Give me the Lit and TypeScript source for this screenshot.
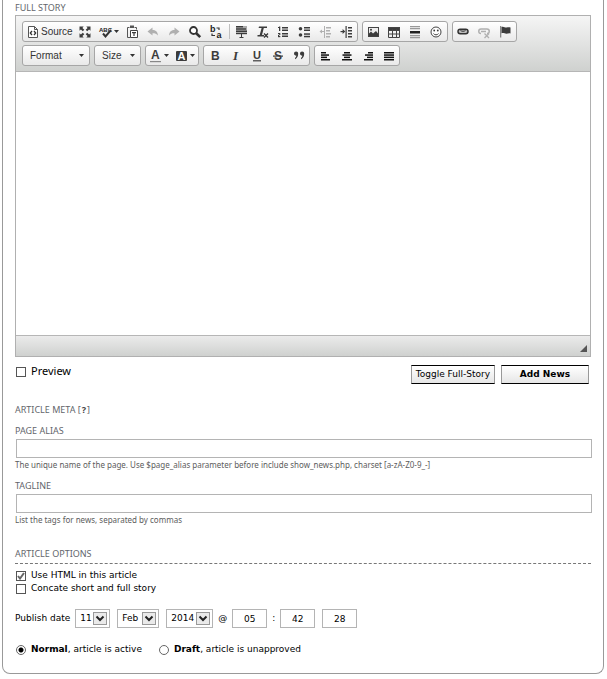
import { LitElement, html, svg, css, TemplateResult } from "lit";
import { customElement, property } from "lit/decorators.js";

const lines = (rows: number[][]) =>
  rows.map(([x, y, w, h = 1.5]) => svg`<rect x=${x} y=${y} width=${w} height=${h} />`);

const ICONS: Record<string, TemplateResult> = {
  source: svg`<path d="M3.500 2.500h6l3 3v8h-9z M9.500 2.500v3h3" fill="#fff" stroke="#555"/>
    <path d="M7 7 5.300 9 7 11 M9 7l1.700 2L9 11" fill="none" stroke="#333" stroke-width="1.300"/>`,
  maximize: svg`<path d="M2.500 2.500h4.200L5.400 3.900 7.300 5.800 5.800 7.300 3.900 5.400 2.500 6.700z M13.500 2.500v4.200l-1.400-1.300-1.900 1.900-1.500-1.500 1.900-1.900L9.300 2.500z M2.500 13.500V9.300l1.400 1.300 1.900-1.900 1.500 1.500-1.900 1.900 1.300 1.400z M13.500 13.500H9.300l1.300-1.400-1.900-1.900 1.500-1.500 1.900 1.900 1.400-1.300z"/>`,
  spell: svg`<text x="2" y="7.500" font-size="6" font-weight="700" fill="#222">ABC</text>
    <path d="M6 9.500l2.500 3L14 6" fill="none" stroke="#333" stroke-width="2"/>`,
  paste: svg`<path d="M5.500 3.500h-2v10h3 M10.500 3.500h2v2" fill="none" stroke="#555"/>
    <path d="M6 1.500h4v2.500H6z" fill="#555"/><path d="M6.500 6.500h7v7h-7z" fill="#fff" stroke="#444"/>
    <path d="M8 8h4v1.200h-1.400V12H9.400V9.200H8z"/>`,
  undo: svg`<path d="M2.500 7.500 7.500 3.500v2.500c3 0 5.200 1.700 5.500 5.500-1.300-1.900-3-2.300-5.500-2.300v2.300z"/>`,
  redo: svg`<path d="M13.500 7.500 8.500 3.500v2.500c-3 0-5.200 1.700-5.500 5.500 1.300-1.900 3-2.300 5.500-2.300v2.300z"/>`,
  find: svg`<circle cx="6.500" cy="6.500" r="3.500" fill="#fff" stroke="#333" stroke-width="1.800"/>
    <path d="M9 9l4.200 4.200" stroke="#333" stroke-width="2.600"/>`,
  replace: svg`<text x="2" y="8" font-size="9" font-weight="700" fill="#222">b</text>
    <text x="8.500" y="14" font-size="9" font-weight="700" fill="#222">a</text>
    <path d="M8.500 4h2.500v2 M4 9.500v2h3" fill="none" stroke="#333" stroke-width="1.200"/>`,
  selectAll: svg`<path d="M3 2h11v8H3z" fill="#aaa"/>
    ${lines([[3, 2, 7, 1.4], [3, 4.300, 10, 1.4], [3, 6.600, 11, 1.4], [3, 9, 11, 1.2], [8, 10, 1, 4], [6.500, 13, 4, 1]])}`,
  removeFormat: svg`<path d="M5 2.500h8v1.600H9.800L8 11h2v1.500H3.500V11h2.200l1.900-6.900H4.600z"/>
    <path d="M10 9.500l4 4 M14 9.500l-4 4" stroke="#333" stroke-width="1.300"/>`,
  numbered: svg`${lines([[7, 3, 6], [7, 5.500, 6], [7, 9, 6], [7, 11.500, 6], [4, 2.500, 1.300, 4.500], [3, 3, 1, 1], [3, 9, 2.300, 1.200], [4.200, 10, 1.100, 1], [3, 11, 1.200, 1], [3, 12, 2.300, 1.200]])}`,
  bulleted: svg`<circle cx="4.500" cy="4.800" r="1.800"/><circle cx="4.500" cy="11" r="1.800"/>
    ${lines([[8, 3, 6], [8, 5.500, 6], [8, 9.300, 6], [8, 11.800, 6]])}`,
  outdent: svg`${lines([[7, 2, 1, 12], [9, 3, 5], [9, 6, 4], [9, 9, 5], [9, 12, 4], [4, 7, 3, 1]])}<path d="M2.500 7.500l2.500-2v4z"/>`,
  indent: svg`${lines([[7.500, 2, 1.200, 12], [10, 3, 4], [10, 6, 4], [10, 9, 4], [10, 12, 4], [2.500, 7, 3, 1.200]])}<path d="M7.300 7.500l-2.700-2.500v5z"/>`,
  image: svg`<rect x="3.500" y="3.500" width="10" height="9" fill="#eee" stroke="#444"/>
    <path d="M4 12V9.500l2-2 2 2 3-2.500 2 2.500V12z"/><circle cx="6" cy="5.800" r="1"/>`,
  table: svg`<path d="M2 3h12v3H2z"/><path d="M2.500 3.500h11v10h-11z M2.500 6.500h11 M2.500 10h11 M6.500 5v8 M10.500 5v8" fill="none" stroke="#444"/>`,
  rule: svg`<path d="M3 2h10v1.200H3z M3 4h10v1.200H3z M3 11h10v1.200H3z M3 13h10v1.200H3z" fill="#999"/><path d="M3 7h10v2.500H3z" fill="#222"/>`,
  smiley: svg`<circle cx="8" cy="8" r="5" fill="#fff" stroke="#444"/><circle cx="6.200" cy="6.500" r=".9"/><circle cx="9.800" cy="6.500" r=".9"/>
    <path d="M5.500 9.500c1.200 1.800 3.800 1.800 5 0" fill="none" stroke="#444"/>`,
  link: svg`<rect x="3" y="5.300" width="10" height="4.500" rx="2.200" fill="#bbb" stroke="#333" stroke-width="1.500"/>
    <path d="M5.500 6.500c1.500 1 3.500 1 5 0" fill="none" stroke="#333"/>`,
  unlink: svg`<path d="M5 9.500c-3 0-3-4.500 0-4.500h6c3 0 3 4.500 0 4.500 M5 7.500h5" fill="none" stroke="currentColor" stroke-width="1.500"/>
    <path d="M8.500 9.500l4.500 4.500 M13 9.500l-4.500 4.500" stroke="currentColor" stroke-width="1.300"/>`,
  anchor: svg`<path d="M3 2h1.300v11.500H3z" fill="#888"/><path d="M4.500 3c2-1 3.500.8 5 .6 1.300-.2 2.500-.6 4-.1V9.500c-1.500-.5-2.700.2-4.200.2S6.500 8.500 4.500 9.300z"/>`,
  textColor: svg`<text x="4" y="11" font-size="12" font-weight="700">A</text><path d="M3 13h11v1.200H3z" fill="#888"/>`,
  bgColor: svg`<rect x="3" y="3" width="11" height="10" rx="1" /><text x="4.500" y="12" font-size="11" font-weight="700" fill="#fff">A</text>`,
  bold: svg`<text x="4" y="12" font-size="12" font-weight="700">B</text>`,
  italic: svg`<text class="serif" x="5" y="12" font-size="13" font-weight="700" font-style="italic">I</text>`,
  underline: svg`<text x="4" y="11" font-size="11" font-weight="700">U</text><path d="M4 12.200h8v1.200H4z"/>`,
  strike: svg`<text x="4" y="12" font-size="12" font-weight="700">S</text><path d="M3 7.500h10v1.200H3z"/>`,
  quote: svg`<path d="M3 5.500a2.100 2.100 0 1 1 4.200 0c0 3-1 4.600-3.200 5.800v-1.400c.8-.6 1.300-1.300 1.400-2.200C4 7.700 3 6.800 3 5.500z M9 5.500a2.100 2.100 0 1 1 4.200 0c0 3-1 4.600-3.200 5.800v-1.400c.8-.6 1.300-1.300 1.400-2.200C10 7.700 9 6.800 9 5.500z"/>`,
  left: svg`<g fill="#111">${lines([[3, 4, 5], [3, 6.300, 8], [3, 8.600, 6], [3, 11, 9]])}</g>`,
  center: svg`<g fill="#111">${lines([[5, 4, 6], [3.500, 6.300, 9], [5, 8.600, 6], [3, 11, 10]])}</g>`,
  right: svg`<g fill="#111">${lines([[8, 4, 5], [5, 6.300, 8], [7, 8.600, 6], [4, 11, 9]])}</g>`,
  justify: svg`<g fill="#111">${lines([[3, 4, 10], [3, 6.300, 10], [3, 8.600, 10], [3, 11, 10]])}</g>`,
};

@customElement("tool-button")
class ToolButton extends LitElement {
  @property() icon = "";
  @property() label = "";
  @property() text = "";
  @property({ type: Boolean }) menu = false;
  @property({ type: Boolean }) off = false;

  static styles = css`
    :host { display: block; }
    .tool {
      display: flex; align-items: center; justify-content: center;
      min-width: 21px; height: 19px; padding: 0 2px; border: 0; background: none;
      color: #3c3c3c; font: 10px/14px "Liberation Sans", Arial, sans-serif;
    }
    .tool:disabled { color: #b0b0b0; }
    .menu { padding: 0 1px; }
    .icon { width: 16px; height: 16px; fill: currentColor; font-family: "Liberation Sans", Arial, sans-serif; }
    .serif { font-family: "Liberation Serif", serif; }
    .caret { width: 5px; height: 3px; margin: 0 2px 0 1px; fill: #333; }
    .text { color: #333; }
  `;

  render() {
    return html`<button class="tool ${this.menu ? "menu" : ""}" type="button" aria-label=${this.label} ?disabled=${this.off}>
      <svg class="icon" viewBox="0 0 16 16" aria-hidden="true">${ICONS[this.icon]}</svg>
      ${this.text ? html`<span class="text">${this.text}</span>` : ""}
      ${this.menu ? html`<svg class="caret" viewBox="0 0 5 3" aria-hidden="true"><path d="M0 0h5L2.500 3z"/></svg>` : ""}
    </button>`;
  }
}

const tool = (icon: string, label: string, off = false) =>
  html`<tool-button icon=${icon} label=${label} ?off=${off}></tool-button>`;

@customElement("app-root")
class AppRoot extends LitElement {
  static styles = css`
    :host { display: block; background: #fff; color: #000; font: 9px/13px "DejaVu Sans", Verdana, sans-serif; }
    * { box-sizing: border-box; }
    .card {
      margin: 0 3px 0 2px; padding: 2px 11px 17px 12px; border: 1px solid #999; border-top: 0;
      border-radius: 0 0 8px 8px;
    }
    .label { display: block; margin: 0; color: #63666c; font: 9px/12px "Noto Sans", Tahoma, sans-serif; }
    .label a { padding: 0 1px; color: #444; font-weight: 700; text-decoration: none; }

    .editor { margin: 1px 1px 0 0; border: 1px solid #b0b0b0; }
    .toolbar {
      display: flex; flex-direction: column; gap: 3px; padding: 5px 6px;
      border-bottom: 1px solid #b6b6b6; background: linear-gradient(#f5f5f5, #cfd1cf);
    }
    .tools { display: flex; gap: 4px; }
    .group {
      display: flex; border: 1px solid #a6a6a6; border-radius: 3px;
      background: linear-gradient(#fff, #e9e9e9);
    }
    .divider { width: 1px; height: 15px; margin: 2px 1px 2px 2px; background: #c0c0c0; }
    .combo { position: relative; }
    .combo select {
      appearance: none; width: 66px; height: 19px; padding: 0 7px; border: 0; background: none;
      color: #333; font: 10px/14px "Liberation Sans", Arial, sans-serif;
    }
    .combo .narrow { width: 45px; }
    .caret { position: absolute; right: 5px; top: 8px; width: 5px; height: 3px; fill: #333; pointer-events: none; }
    .story { display: block; width: 100%; height: 263px; border: 0; padding: 8px; resize: none; outline: 0; background: #fff; }
    .status {
      display: flex; justify-content: flex-end; align-items: flex-end; height: 21px; padding: 4px 3px;
      border-top: 1px solid #b6b6b6; background: linear-gradient(#ebebeb, #cfd1cf);
    }
    .grip { width: 7px; height: 7px; fill: #555; }

    .actions { display: flex; gap: 6px; align-items: flex-start; margin: 8px 3px 20px 0; }
    .preview { margin-right: auto; }
    .preview span { margin-top: -3px; font: 11px/13px "Noto Sans", Tahoma, sans-serif; }
    .btn {
      height: 19px; padding: 0 4px; border: 1px solid #999; border-color: #000 #999;
      background: linear-gradient(#fff, #e6e6e6); color: #000; font: inherit;
    }
    .primary { min-width: 88px; font-weight: 700; }

    .option { display: flex; align-items: center; gap: 5px; height: 13px; }
    .check, .radio { appearance: none; flex: none; width: 10px; height: 10px; margin: 0 0 0 1px; border: 1px solid #555; background: #fff; }
    .mark { position: relative; display: flex; }
    .tick { position: absolute; left: 2px; top: 1px; width: 8px; height: 8px; fill: none; stroke: #666; stroke-width: 2; pointer-events: none; }
    .radio { border-color: #666; border-radius: 50%; }
    .radio:checked { background: radial-gradient(circle, #000 0 2px, #fff 3px); }

    .field { margin-top: 9px; }
    .text {
      display: block; width: calc(100% - 1px); height: 19px; margin: 2px 0 0 1px; padding: 2px 4px;
      border: 1px solid #b4b4b4; background: #fff; font: inherit;
    }
    .hint { margin: 0; color: #5c5c5c; font: 8px/13px "Noto Sans", Tahoma, sans-serif; }
    .options { margin: 22px 1px 5px 0; padding-bottom: 3px; border-bottom: 1px dashed #777; }

    .date { display: flex; align-items: center; gap: 7px; margin: 14px 0 15px; }
    .date .first { margin-right: -2px; }
    .date .sep { margin: 0 -2px; }
    .pick { position: relative; display: flex; }
    .pick select, .num {
      appearance: none; height: 19px; padding: 0 4px; border: 1px solid #b4b4b4; border-radius: 0;
      background: #fff; color: #000; font: inherit;
    }
    .day { width: 35px; }
    .month { width: 42px; }
    .year { width: 47px; }
    .num { width: 35px; text-align: center; }
    .drop {
      position: absolute; right: 3px; top: 3px; width: 14px; height: 13px; border: 1px solid #999;
      background: #eaeaea; fill: none; stroke: #222; stroke-width: 2; pointer-events: none;
    }
    .states { display: flex; gap: 16px; }
  `;

  private pick(id: string, label: string, value: string) {
    return html`<span class="pick">
      <select id=${id} class=${id} aria-label=${label}><option>${value}</option></select>
      <svg class="drop" viewBox="0 0 12 11" aria-hidden="true"><path d="M2.500 3.500 6 7l3.500-3.500"/></svg>
    </span>`;
  }

  private combo(label: string, cls = "") {
    return html`<div class="group"><span class="combo">
      <select class=${cls} aria-label=${label}><option>${label}</option></select>
      <svg class="caret" viewBox="0 0 5 3" aria-hidden="true"><path d="M0 0h5L2.500 3z"/></svg>
    </span></div>`;
  }

  render() {
    return html`<form class="card">
      <label class="label" for="story">FULL STORY</label>
      <section class="editor">
        <div class="toolbar">
          <div class="tools">
            <div class="group">
              <tool-button icon="source" label="Source" text="Source"></tool-button>
              ${tool("maximize", "Maximize")}
              <tool-button icon="spell" label="Spell check" menu></tool-button>
              ${tool("paste", "Paste as plain text")}
              ${tool("undo", "Undo", true)} ${tool("redo", "Redo", true)}
              ${tool("find", "Find")} ${tool("replace", "Replace")}
              <span class="divider"></span>
              ${tool("selectAll", "Select all")} ${tool("removeFormat", "Remove format")}
              ${tool("numbered", "Numbered list")} ${tool("bulleted", "Bulleted list")}
              ${tool("outdent", "Decrease indent", true)} ${tool("indent", "Increase indent")}
            </div>
            <div class="group">
              ${tool("image", "Image")} ${tool("table", "Table")}
              ${tool("rule", "Horizontal line")} ${tool("smiley", "Smiley")}
            </div>
            <div class="group">
              ${tool("link", "Link")} ${tool("unlink", "Unlink", true)} ${tool("anchor", "Anchor")}
            </div>
          </div>
          <div class="tools">
            ${this.combo("Format")} ${this.combo("Size", "narrow")}
            <div class="group">
              <tool-button icon="textColor" label="Text color" menu></tool-button>
              <tool-button icon="bgColor" label="Background color" menu></tool-button>
            </div>
            <div class="group">
              ${tool("bold", "Bold")} ${tool("italic", "Italic")} ${tool("underline", "Underline")}
              ${tool("strike", "Strike through")} ${tool("quote", "Block quote")}
            </div>
            <div class="group">
              ${tool("left", "Align left")} ${tool("center", "Center")}
              ${tool("right", "Align right")} ${tool("justify", "Justify")}
            </div>
          </div>
        </div>
        <textarea id="story" class="story"></textarea>
        <div class="status"><svg class="grip" viewBox="0 0 7 7" aria-hidden="true"><path d="M7 0v7H0z"/></svg></div>
      </section>

      <div class="actions">
        <label class="option preview"><input class="check" type="checkbox" /><span>Preview</span></label>
        <button class="btn" type="button">Toggle Full-Story</button>
        <button class="btn primary" type="button">Add News</button>
      </div>

      <h2 class="label">ARTICLE META [<a href="#help">?</a>]</h2>
      <div class="field">
        <label class="label" for="alias">PAGE ALIAS</label>
        <input id="alias" class="text" type="text" />
        <p class="hint">The unique name of the page. Use $page_alias parameter before include show_news.php, charset [a-zA-Z0-9_-]</p>
      </div>
      <div class="field">
        <label class="label" for="tags">TAGLINE</label>
        <input id="tags" class="text" type="text" />
        <p class="hint">List the tags for news, separated by commas</p>
      </div>

      <h2 class="label options">ARTICLE OPTIONS</h2>
      <label class="option">
        <span class="mark"><input class="check" type="checkbox" checked />
          <svg class="tick" viewBox="0 0 8 8" aria-hidden="true"><path d="M1 4l2 2.500L7 1"/></svg></span>
        <span>Use HTML in this article</span>
      </label>
      <label class="option"><input class="check" type="checkbox" /><span>Concate short and full story</span></label>

      <div class="date">
        <label class="first" for="day">Publish date</label>
        ${this.pick("day", "Day", "11")} ${this.pick("month", "Month", "Feb")} ${this.pick("year", "Year", "2014")}
        <span class="sep">@</span>
        <input class="num" aria-label="Hour" value="05" />
        <span class="sep">:</span>
        <input class="num" aria-label="Minute" value="42" />
        <input class="num" aria-label="Second" value="28" />
      </div>

      <div class="states">
        <label class="option"><input class="radio" type="radio" name="state" checked /><span><b>Normal</b>, article is active</span></label>
        <label class="option"><input class="radio" type="radio" name="state" /><span><b>Draft</b>, article is unapproved</span></label>
      </div>
    </form>`;
  }
}
